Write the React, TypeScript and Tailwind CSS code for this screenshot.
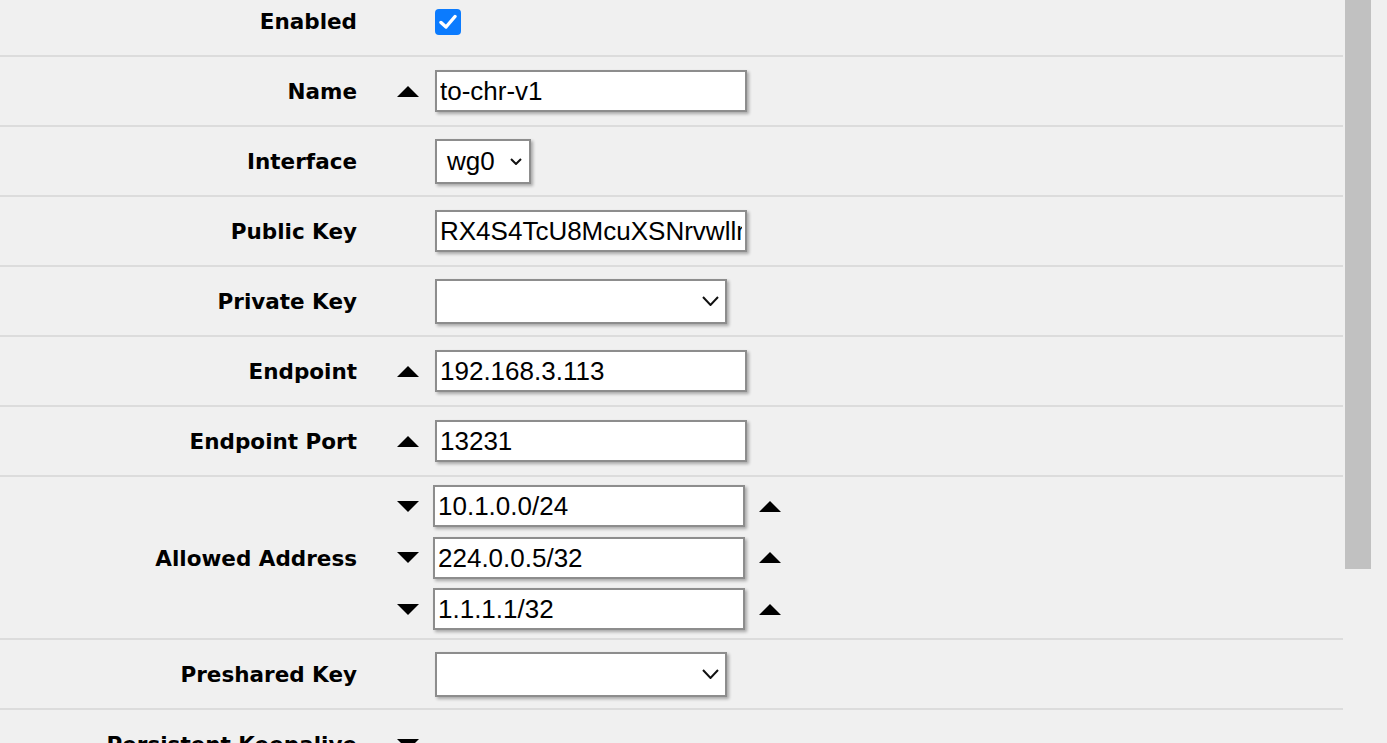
import type { ReactNode } from "react";

const labelFont = { fontFamily: '"DejaVu Sans", Verdana, sans-serif' };
const fieldFont = { fontFamily: '"Liberation Sans", Arial, sans-serif' };

function Triangle({ down = false }: { down?: boolean }) {
  return (
    <svg width="22" height="11" viewBox="0 0 22 11" className="block">
      {down ? <polygon points="0,0 22,0 11,11" fill="#000" /> : <polygon points="11,0 22,11 0,11" fill="#000" />}
    </svg>
  );
}

function Chevron({ w, h }: { w: number; h: number }) {
  return (
    <svg width={w} height={h} viewBox={`0 0 ${w} ${h}`} className="block">
      <polyline points={`1,1 ${w / 2},${h - 1} ${w - 1},1`} fill="none" stroke="#111" strokeWidth="2" />
    </svg>
  );
}

function TextField({ value }: { value: string }) {
  return (
    <input
      readOnly
      value={value}
      style={fieldFont}
      className="h-[42px] w-[312px] border-2 border-[#8d8d8d] bg-white px-[3px] pt-[1px] text-[26px] text-black shadow-[2px_2px_3px_rgba(0,0,0,0.3)] outline-none"
    />
  );
}

function SelectField({ value = "", wide = false }: { value?: string; wide?: boolean }) {
  return (
    <div
      style={fieldFont}
      className={`flex h-[45px] items-center justify-between border-2 border-[#8d8d8d] bg-white shadow-[2px_2px_3px_rgba(0,0,0,0.3)] ${
        wide ? "w-[292px] pl-[6px] pr-[6px]" : "w-[96px] pl-[10px] pr-[7px]"
      }`}
    >
      <span className="text-[26px] text-black">{value}</span>
      {wide ? <Chevron w={17} h={10} /> : <Chevron w={12} h={7} />}
    </div>
  );
}

function Label({ text }: { text: string }) {
  return (
    <div style={labelFont} className="w-[357px] pt-[3px] text-right text-[21.5px] font-bold text-black">
      {text}
    </div>
  );
}

function Row({
  label,
  arrow,
  children,
}: {
  label: string;
  arrow?: ReactNode;
  children?: ReactNode;
}) {
  return (
    <div className="flex h-[70px] shrink-0 items-center border-b-2 border-[#dcdcdc]">
      <Label text={label} />
      <div className="ml-[40px] flex w-[22px] justify-center">{arrow}</div>
      <div className="ml-[16px] flex items-center">{children}</div>
    </div>
  );
}

const allowed = ["10.1.0.0/24", "224.0.0.5/32", "1.1.1.1/32"];

export default function App() {
  return (
    <div className="flex h-[743px] w-[1387px] overflow-hidden bg-[#f0f0f0]">
      <div className="-mt-[13px] flex w-[1343px] flex-col">
        <Row label="Enabled">
          <div className="mt-[1px] flex size-[26px] items-center justify-center rounded-[4px] bg-[#0b7bfe]">
            <svg width="18" height="16" viewBox="0 0 18 16">
              <polyline points="2,8.5 7,13 16,2.5" fill="none" stroke="#fff" strokeWidth="3.4" strokeLinecap="round" strokeLinejoin="round" />
            </svg>
          </div>
        </Row>
        <Row label="Name" arrow={<Triangle />}>
          <TextField value="to-chr-v1" />
        </Row>
        <Row label="Interface">
          <SelectField value="wg0" />
        </Row>
        <Row label="Public Key">
          <TextField value="RX4S4TcU8McuXSNrvwllmRZmZ6dBcUq" />
        </Row>
        <Row label="Private Key">
          <SelectField wide />
        </Row>
        <Row label="Endpoint" arrow={<Triangle />}>
          <TextField value="192.168.3.113" />
        </Row>
        <Row label="Endpoint Port" arrow={<Triangle />}>
          <TextField value="13231" />
        </Row>
        <div className="flex h-[163px] shrink-0 items-center border-b-2 border-[#dcdcdc]">
          <Label text="Allowed Address" />
          <div className="ml-[40px] flex flex-col gap-[9.5px]">
            {allowed.map((a) => (
              <div key={a} className="flex items-center">
                <Triangle down />
                <div className="ml-[14px]">
                  <TextField value={a} />
                </div>
                <div className="ml-[14px]">
                  <Triangle />
                </div>
              </div>
            ))}
          </div>
        </div>
        <Row label="Preshared Key">
          <SelectField wide />
        </Row>
        <Row label="Persistent Keepalive" arrow={<Triangle down />} />
      </div>
      <div className="ml-[2px] w-[26px]">
        <div className="h-[569px] w-[26px] bg-[#c1c1c1]" />
      </div>
    </div>
  );
}
